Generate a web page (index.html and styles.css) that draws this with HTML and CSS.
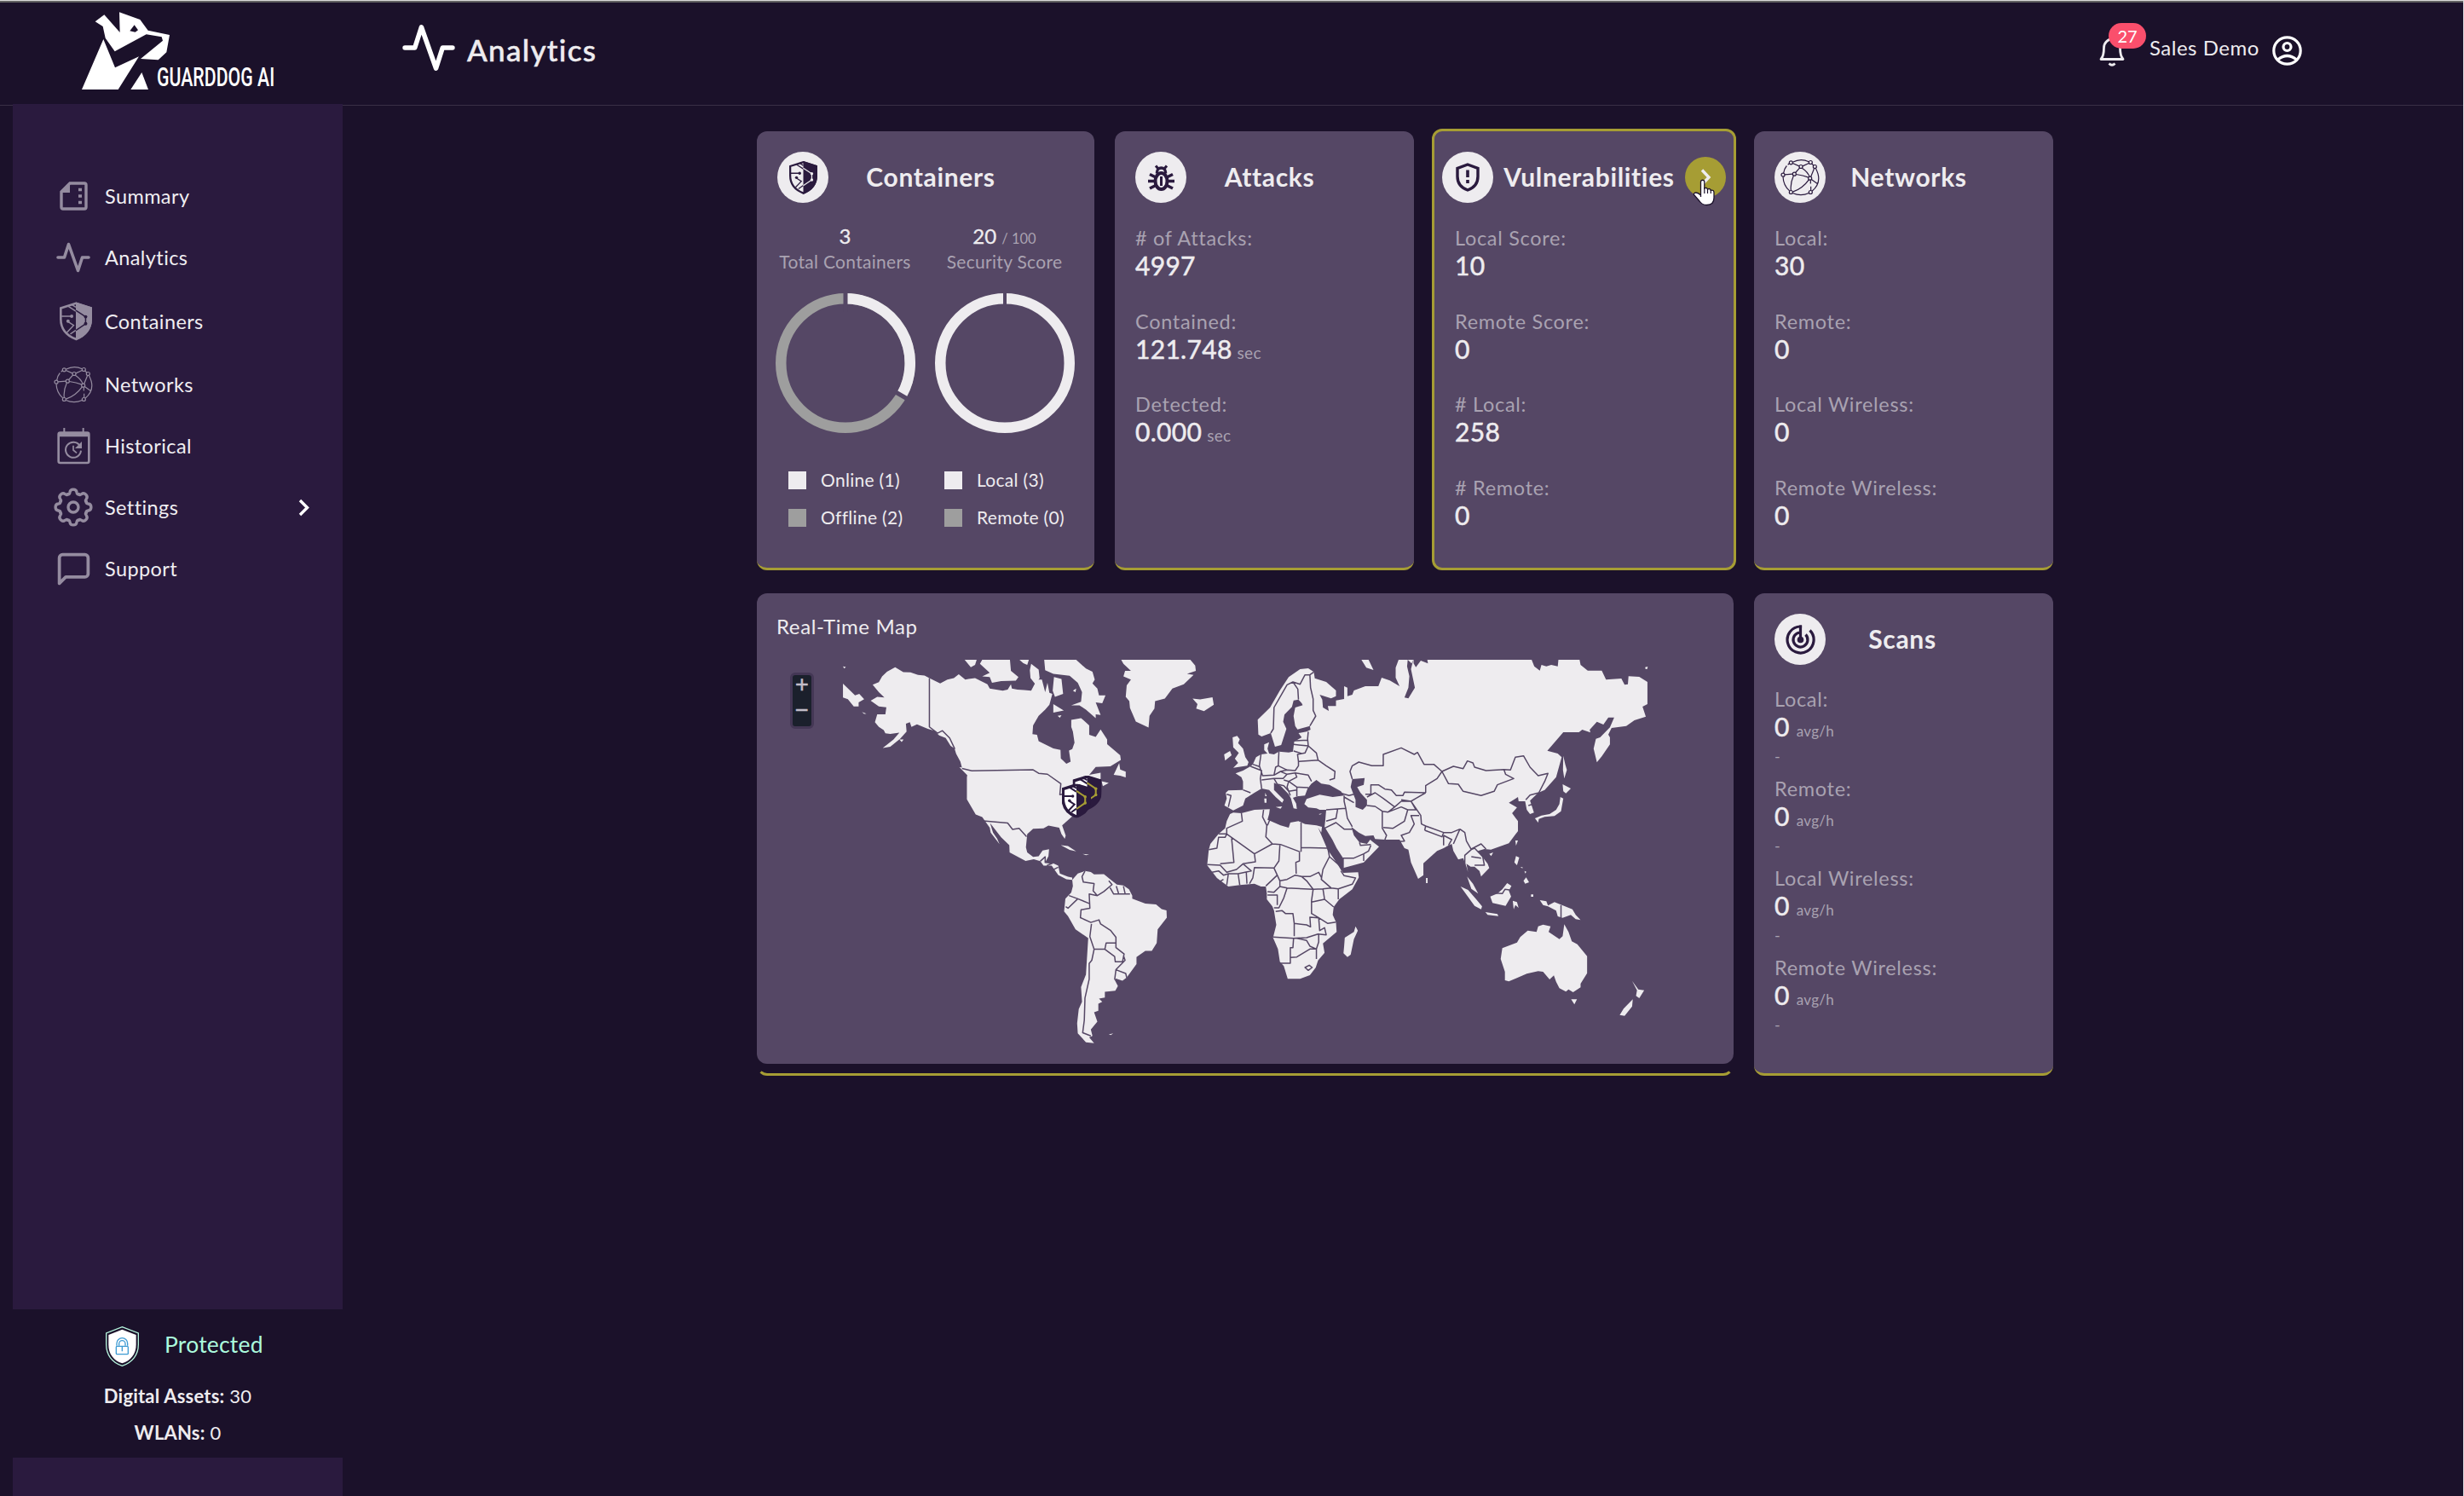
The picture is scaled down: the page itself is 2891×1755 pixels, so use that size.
FILE: index.html
```html
<!DOCTYPE html>
<html lang="en">
<head>
<meta charset="utf-8">
<title>Guarddog AI - Analytics</title>
<link rel="stylesheet" href="styles.css">
</head>
<body>
<svg width="0" height="0" class="defs" aria-hidden="true">
  <symbol id="i-shield" viewBox="0 0 116 137">
    <path class="sh-bg" d="M58 2 112 20V60C112 94 92 120 58 134 24 120 4 94 4 60V20Z"/>
    <g class="sh-left"><path d="M6 50H40M30 70 50 83 26 108M38 114 58 100M30 14 58 32M42 8 58 18"/><circle cx="43" cy="50" r="6"/><circle cx="30" cy="68" r="6"/></g>
    <path class="sh-edge" d="M58 4 112 21V60C112 94 92 119 58 132 24 119 4 94 4 60V21Z"/>
    <path class="sh-fill" d="M58 0 116 18V60C116 97 94 122 58 137Z"/>
    <g class="sh-right"><path d="M58 29 93 52V77L58 101"/><circle cx="93" cy="52" r="6"/><circle cx="93" cy="77" r="6"/></g>
  </symbol>
  <symbol id="i-net" viewBox="0 0 138 131">
    <g fill="none" stroke="currentColor" stroke-width="3.6">
      <path d="M43 12Q72-3 100 11M110 18 118 24M124 34Q150 82 111 114M100 121Q72 134 43 121M32 113Q10 94 9 63M11 51Q14 34 22 25M26 21 31 17M43 16 66 26M78 26 100 16M68 32 53 49M76 33Q96 46 102 63M15 56 43 54M55 55Q80 58 99 66M46 60Q34 86 37 112M119 34 107 63M100 74Q78 105 43 117M106 75V88M107 98V112M109 73 130 88"/>
      <circle cx="37" cy="14" r="6"/><circle cx="106" cy="13" r="6"/><circle cx="72" cy="28" r="6"/><circle cx="121" cy="28" r="6"/><circle cx="9" cy="57" r="6"/><circle cx="49" cy="54" r="6"/><circle cx="104" cy="69" r="6"/><circle cx="37" cy="118" r="6"/><circle cx="106" cy="118" r="6"/>
    </g>
  </symbol>
  <symbol id="i-pulse" viewBox="0 0 40 36">
    <path d="M2 18H9.500L14.500 2.500 25.500 33.500 30.500 18H38" fill="none" stroke="currentColor" stroke-width="3.6" stroke-linecap="round" stroke-linejoin="round"/>
  </symbol>
  <path id="tooth" d="M-19-46C-14-44-13-48-12-53-10-66 10-66 12-53 13-48 14-44 19-46"/>
</svg>

<header class="topbar">
  <svg class="logo" viewBox="0 0 780 360" role="img" aria-label="Guarddog AI">
    <path fill="#fff" fill-rule="evenodd" d="M127 52 182 114 180 43 253 69 281 107 357 123 346 184 317 211 255 207 333 143 329 130 275 121 164 181 131 134 122 93 95 76ZM233 88 217 109 236 113 246 106Z"/>
    <path fill="#fff" d="M124 138 165 238 249 199 176 315H48ZM259 255 282 315H220Z"/>
    <text transform="translate(312 302) scale(.695 1)" class="wordmark">GUARDDOG AI</text>
  </svg>
  <h1 class="page-title"><svg class="title-pulse"><use href="#i-pulse"/></svg><span>Analytics</span></h1>
  <div class="user">
    <div class="bell">
      <svg viewBox="0 0 30 36" width="30" height="36"><path d="M2 27.500C5 24 5.500 21 5.500 14A9.500 10 0 0 1 24.500 14C24.500 21 25 24 28 27.500Z" fill="none" stroke="#eeecef" stroke-width="2.800" stroke-linejoin="round"/><path d="M11.500 32.500Q15 36 18.500 32.500" fill="none" stroke="#eeecef" stroke-width="2.800"/></svg>
      <span class="badge">27</span>
    </div>
    <span class="user-name">Sales Demo</span>
    <svg class="avatar" viewBox="0 0 35 35"><g fill="none" stroke="#fff" stroke-width="3.200"><circle cx="17.500" cy="17.500" r="15.700"/><circle cx="17.500" cy="13" r="4.500"/><path d="M6.500 28Q17.500 19 28.500 28"/></g></svg>
  </div>
</header>

<div class="shell">
  <aside class="sidebar">
    <nav class="nav">
      <a class="nav-item r72"><span class="nav-icon"><svg width="33" height="34" viewBox="0 0 33 34"><path d="M12 2H29Q31 2 31 4V30Q31 32 29 32H4Q2 32 2 30V12Z" fill="none" stroke="currentColor" stroke-width="3.400"/><path d="M12 1V13H1Z" fill="currentColor"/><path d="M22 9.500h4M22 17h4M22 24.500h4" stroke="currentColor" stroke-width="3.400"/></svg></span><span class="nav-label">Summary</span></a>
      <a class="nav-item r72"><span class="nav-icon"><svg width="40" height="36"><use href="#i-pulse"/></svg></span><span class="nav-label">Analytics</span></a>
      <a class="nav-item r78"><span class="nav-icon in-right"><svg class="shield-nav" width="38" height="46"><use href="#i-shield"/></svg></span><span class="nav-label">Containers</span></a>
      <a class="nav-item r70"><span class="nav-icon"><svg width="46" height="44"><use href="#i-net"/></svg></span><span class="nav-label">Networks</span></a>
      <a class="nav-item r74"><span class="nav-icon"><svg width="39" height="43" viewBox="0 0 117 129"><rect x="5" y="17" width="107" height="106" rx="6" fill="none" stroke="currentColor" stroke-width="8"/><path d="M4 16H113V31H4ZM22 0h6v18h-6ZM89 0h6v18h-6Z" fill="currentColor"/><path d="M80 63A27 27 0 1 0 84 80" fill="none" stroke="currentColor" stroke-width="6"/><path d="M87 48V72H63Z" fill="currentColor"/><path d="M57 62V78L69 88" fill="none" stroke="currentColor" stroke-width="5"/></svg></span><span class="nav-label">Historical</span></a>
      <a class="nav-item r70"><span class="nav-icon"><svg width="46" height="46" viewBox="-69 -69 138 138"><g fill="none" stroke="currentColor" stroke-width="10" stroke-linecap="round"><circle r="18"/><use href="#tooth"/><use href="#tooth" transform="rotate(45)"/><use href="#tooth" transform="rotate(90)"/><use href="#tooth" transform="rotate(135)"/><use href="#tooth" transform="rotate(180)"/><use href="#tooth" transform="rotate(225)"/><use href="#tooth" transform="rotate(270)"/><use href="#tooth" transform="rotate(315)"/></g></svg></span><span class="nav-label">Settings</span><svg class="nav-more" viewBox="0 0 13 21"><path d="M2 2 10.500 10.500 2 19" fill="none" stroke="#fff" stroke-width="3.400"/></svg></a>
      <a class="nav-item r74"><span class="nav-icon"><svg width="45" height="45" viewBox="0 0 24 24"><path d="M21 15a2 2 0 0 1-2 2H7l-4 4V5a2 2 0 0 1 2-2h14a2 2 0 0 1 2 2z" fill="none" stroke="currentColor" stroke-width="2" stroke-linejoin="round"/></svg></span><span class="nav-label">Support</span></a>
    </nav>
    <div class="status">
      <div class="status-head">
        <svg width="39" height="47" viewBox="0 0 117 141"><path d="M58 2 115 24V64C115 100 94 128 58 139 22 128 2 100 2 64V24Z" fill="#1b112a" stroke="#b5f3dc" stroke-width="4"/><path d="M58 11 107 30V65C107 97 88 120 58 130 28 120 10 97 10 65V30Z" fill="#fff"/><g fill="none" stroke="#3d9bd3" stroke-width="4"><rect x="37" y="70" width="42" height="28" rx="3"/><path d="M39 68V60A19 19 0 0 1 77 60V68M47 68V61A11 11 0 0 1 69 61V68M58 72V88"/></g></svg>
        <span class="protected">Protected</span>
      </div>
      <p class="status-line l1"><b>Digital Assets:</b> 30</p>
      <p class="status-line l2"><b>WLANs:</b> 0</p>
    </div>
  </aside>

  <main class="board">
    <section class="card containers">
      <div class="card-head"><span class="disc"><svg class="shield-card" width="33" height="39"><use href="#i-shield"/></svg></span><h2>Containers</h2><i class="slot"></i></div>
      <div class="gauges">
        <div class="gauge">
          <p class="g-num">3</p><p class="g-label">Total Containers</p>
          <svg width="164" height="164" viewBox="-82 -82 164 164"><g fill="none" stroke-width="12.500"><circle r="75.750" stroke="#9e9e9e"/><path d="M0-75.750A75.750 75.750 0 0 1 65.600 37.875" stroke="#eeecef"/></g><path d="M0-60V-84M52 30 72.700 42" stroke="#554765" stroke-width="5"/></svg>
        </div>
        <div class="gauge">
          <p class="g-num">20 <small>/ 100</small></p><p class="g-label">Security Score</p>
          <svg width="164" height="164" viewBox="-82 -82 164 164"><circle r="75.750" fill="none" stroke-width="12.500" stroke="#eeecef"/><path d="M0-60V-84" stroke="#554765" stroke-width="4"/></svg>
        </div>
      </div>
      <ul class="legend">
        <li><i class="on"></i><span>Online (1)</span></li><li><i class="on"></i><span>Local (3)</span></li>
        <li><i></i><span>Offline (2)</span></li><li><i></i><span>Remote (0)</span></li>
      </ul>
    </section>

    <section class="card">
      <div class="card-head"><span class="disc"><svg width="31" height="31" viewBox="0 0 31 31"><g fill="none" stroke="#2a1a3e"><path d="M9 1.500 12 5M22 1.500 19 5" stroke-width="3"/><path d="M10.500 10.500V9A5 5 0 0 1 20.500 9V10.500" stroke-width="3.400"/><ellipse cx="15.500" cy="19.500" rx="7" ry="9.500" stroke-width="4"/><path d="M15.500 14V25" stroke-width="3"/><path d="M0 19.500H8M23 19.500H31M2 11.500 9 15M29 11.500 22 15M2 28 9 24.500M29 28 22 24.500" stroke-width="3.600"/></g></svg></span><h2>Attacks</h2><i class="slot"></i></div>
      <dl class="stats">
        <div><dt># of Attacks:</dt><dd>4997</dd></div>
        <div><dt>Contained:</dt><dd>121.748 <small>sec</small></dd></div>
        <div><dt>Detected:</dt><dd>0.000 <small>sec</small></dd></div>
      </dl>
    </section>

    <section class="card active">
      <div class="card-head tight"><span class="disc"><svg width="28" height="34" viewBox="0 0 28 34"><path d="M14 2 26 6.500V16C26 24 21 29.500 14 32 7 29.500 2 24 2 16V6.500Z" fill="none" stroke="#2a1a3e" stroke-width="3.400"/><path d="M14 8.500V17M14 20V24" stroke="#2a1a3e" stroke-width="3.600"/></svg></span><h2>Vulnerabilities</h2>
        <span class="go"><svg width="13" height="20" viewBox="0 0 13 20"><path d="M2 1.500 10 10 2 18.500" fill="none" stroke="#eeecef" stroke-width="3.400"/></svg>
          <svg class="cursor" width="26" height="33" viewBox="0 0 26 33"><path d="M9.500 22V4A2.200 2.200 0 0 1 13.800 4V12Q16.500 10.500 17.500 13 20.500 11.500 21.300 14.300 25 13.500 25 17V23Q25 31.500 16.500 31.500 11 31.500 8 27L1.500 19.500Q1 17 4 17 6.500 17 9.500 20Z" fill="#fff" stroke="#1b112a" stroke-width="1.300"/><path d="M13.800 11V18M17.500 13V18M21.300 14V18" stroke="#1b112a" stroke-width="1.200"/></svg></span></div>
      <dl class="stats">
        <div><dt>Local Score:</dt><dd>10</dd></div>
        <div><dt>Remote Score:</dt><dd>0</dd></div>
        <div><dt># Local:</dt><dd>258</dd></div>
        <div><dt># Remote:</dt><dd>0</dd></div>
      </dl>
    </section>

    <section class="card">
      <div class="card-head"><span class="disc dark-net"><svg width="46" height="44"><use href="#i-net"/></svg></span><h2>Networks</h2><i class="slot"></i></div>
      <dl class="stats">
        <div><dt>Local:</dt><dd>30</dd></div>
        <div><dt>Remote:</dt><dd>0</dd></div>
        <div><dt>Local Wireless:</dt><dd>0</dd></div>
        <div><dt>Remote Wireless:</dt><dd>0</dd></div>
      </dl>
    </section>

    <section class="map-wrap">
      <div class="map-card">
        <h3>Real-Time Map</h3>
        <div class="zoomer"><span>+</span><span>−</span></div>
        <svg class="map" viewBox="976 774 970 450" width="970" height="450">
          <g transform="translate(880 690) scale(.38265 .3699)">
            <g class="land">
              <path d="M550 285 535 277 515 275 492 267 470 266 445 251 420 265 405 280 395 298 376 306 395 330 412 347 390 345 370 357 395 375 418 378 415 400 390 400 383 425 395 440 410 450 415 460 430 462 458 458 440 480 407 507 430 503 460 478 480 455 478 430 490 425 495 440 512 432 545 446 565 452 580 467 600 475 615 500 627 508 632 525 645 550 650 570 668 580 665 600V670L692 718 712 726 735 760 738 775 765 812 758 795 745 775 736 745 770 790 795 815 796 838 845 865 870 860 890 866 900 880 925 880 945 910 970 923 988 925 988 918 975 915 950 905 945 880 928 872 905 870 915 850 917 828 897 832 885 850 868 852 850 838 846 822 850 780 868 763 900 762 915 753 948 760 955 780 965 795 968 785 957 752 990 722 1010 700 1030 650 1050 615 1075 605 1075 585 1040 592 1060 567 1105 565 1137 545 1135 530 1095 495 1095 480 1075 448 1060 472 1040 465 1040 435 1015 412 985 418 985 440 990 455 995 490 988 510 978 515 983 550 970 557 953 540 952 513 930 508 885 485 880 465 866 463 868 435 885 405 905 385 918 370 927 335 918 332 912 300 905 330 895 290 880 290 862 325 840 323 820 322 803 318 800 305 790 322 775 325 735 318 728 305 690 285 670 288 660 290 640 273 625 285 605 290 583 302Z"/>
              <path d="M658 227H695L690 243 677 251ZM712 227H797L800 262 823 282 815 293 770 295 742 300 735 282 712 280 735 268 705 240ZM826 227H855L850 243 838 238ZM862 240 885 258 888 285 875 305 860 285 858 260ZM902 227H1000L1030 255 1050 265 1057 290 1050 302 1065 318 1070 340 1090 340 1080 365 1060 362 1075 402 1060 400 1060 412 1030 385 1010 372 985 372 1015 360 1018 330 1005 300 980 278 930 272 905 260ZM932 282 955 288 960 335 935 345 928 325ZM930 368 962 388 930 395ZM990 325 1000 318 998 330ZM943 405 955 403 950 411ZM1132 555 1135 575 1152 582V600L1135 595 1115 592ZM1078 612 1100 618 1082 628ZM642 568 660 570 680 585V600L665 592ZM285 303 310 328 322 340 335 335 350 352 333 362 333 375 318 375 300 352 285 347ZM285 248 294 250 289 255ZM343 393 357 398 350 399ZM458 480H471L465 488ZM953 815 975 818 1000 835 980 830ZM1020 843 1040 845 1030 847ZM1100 1415 1114 1412 1106 1417Z"/>
              <path d="M1138 227H1350L1365 245 1367 262 1340 272 1360 275 1330 305 1295 318 1272 350 1242 358 1240 382 1225 405 1222 442 1183 423 1165 380 1163 358 1152 345 1155 308 1168 290 1145 280 1150 262 1168 262 1145 240ZM1357 350 1380 353 1418 346 1422 370 1392 390 1368 382 1372 368Z"/>
              <path d="M988 925 1005 905 1027 897 1045 900 1055 908 1085 907 1110 928 1125 940 1145 943 1162 955 1172 975 1172 985 1212 1000 1245 1003 1262 1018 1277 1022 1278 1045 1250 1082 1247 1125 1232 1150 1212 1150 1185 1170 1185 1192 1155 1235 1142 1245 1122 1238 1118 1242 1128 1262 1120 1277 1088 1280 1088 1298 1070 1302 1080 1312 1068 1318 1068 1340 1055 1345 1065 1375 1045 1400 1050 1420 1040 1425 1055 1443 1030 1440 1005 1412 1003 1380 1008 1335 1018 1312 1015 1265 1030 1225 1037 1110 998 1082 975 1040 963 1025 967 985 985 965 990 945Z"/>
            </g>
            <path class="border" d="M550 285V440L575 460 590 452 612 475 628 510M650 572 680 579 868 576 885 587 912 590 953 620 950 655 975 650 990 640 1030 610M715 738 790 745 805 765 825 762 848 788M890 866 905 852V870L928 872 910 880M925 895 945 885M1027 897 1018 915 1022 932 1055 937 1052 960 1065 975 1085 962 1110 940 1100 928M1104 950 1115 970 1165 970M1130 968 1123 945M1150 968 1145 945M1065 975 1040 970 1042 1015 1015 1020 1013 1045 1045 1060 1070 1052 1075 1065 1105 1085 1122 1107V1125L1092 1125 1088 1145 1055 1145 1042 1105 1047 1065M978 975 1005 985 975 1015 968 1010M1005 985 1040 1000M1055 1145 1048 1180 1040 1190V1240L1027 1300 1025 1370 1020 1410 1045 1420M1088 1145 1118 1168 1120 1185H1142L1147 1160 1122 1140V1125M1145 1165 1150 1180 1122 1210 1118 1242M1122 1210 1152 1222 1155 1235"/>
          </g>
          <g transform="translate(1380 750) scale(.38265 .33333)">
            <g class="land">
              <path d="M422 115 405 102 380 105 345 133 318 180 288 240 250 283 252 335 262 342 290 330 303 378 322 372 338 315 328 290 332 265 355 238 360 215 375 212 385 225 388 232 365 240 360 270 365 305 372 317 410 305 412 318 400 325 375 330 385 345 362 360 358 395 345 398 315 395 300 405 285 402 280 385 285 362 270 370V390L280 402 260 405 245 415 235 440 228 447 205 462 182 472 200 485 205 500V530L160 532 152 540 155 560 148 585 175 602 205 585 212 560 240 540 262 525 285 530 305 555 325 575 330 565 300 530V505L320 515 345 545 352 560 360 595 370 597 368 578 358 558 370 553 395 550 403 525 415 508 430 495 445 508 470 512 505 535 515 550 480 555 440 547 400 562 393 580 405 592 430 595 440 600 460 600 457 640 455 660 479 705 492 735 512 770V805L575 785 622 730 600 710 595 705 585 720 562 715 545 690 537 660 560 680 580 692 605 690 610 703 640 705 685 705 700 735 712 740 720 785 742 843 758 830V788L800 745 820 735 835 725 845 720 850 745 865 775 880 770 890 800 895 820 890 790 903 800 915 800 930 815 935 835 960 805 955 790 935 760 925 745 945 738 965 740 1020 718 1048 675V640L1030 612 1045 592 1020 575 1048 555 1050 570 1070 570 1075 600 1085 615 1097 610 1090 585 1085 568 1110 540 1130 530 1165 485 1182 415 1170 402 1138 392 1187 327H1235L1245 318 1270 328 1268 318 1290 290 1310 300 1325 275 1343 275 1330 310 1300 345 1287 350 1280 385 1290 433 1305 412 1330 370 1330 345 1325 335 1335 312 1380 305 1405 285 1440 272 1430 237 1445 228V150L1420 132 1387 130 1385 158 1375 160 1365 138 1318 142 1305 110H1262L1240 90 1237 72H1172L1170 95 1150 90 1135 95 1120 90 1115 110 1098 95 1090 72H770L772 85 750 75 735 98 728 85V72H682L673 100V135L685 165 655 145 630 135 620 165 580 165 545 180 540 195 525 200V170L515 165V210L490 215V235L465 235 468 252 450 240 448 212 440 195 475 208 490 200V180L460 150 425 137Z"/>
              <path d="M568 72H590L605 108 583 100ZM1187 410 1193 440 1198 460 1190 490 1186 460ZM1185 510 1210 525 1195 542 1187 535ZM1178 555 1187 560 1180 605 1160 622 1130 625 1112 632 1110 645 1100 630 1120 620 1145 615 1165 600 1175 580ZM173 345 187 340 195 352 190 365 205 385 212 415 222 432 218 445 175 452 190 435 180 420 192 400 175 380ZM165 393 170 408 150 427 147 405ZM305 590 325 588 320 596ZM270 560H277V575H271ZM273 540 278 552H273ZM437 615 447 613 441 617ZM766 840H771V858H766ZM1040 708H1048L1042 726ZM960 755 972 750 966 763ZM1042 763 1052 768 1045 795 1037 785ZM1065 850 1073 838 1082 855 1070 860ZM1055 802H1062V806ZM1068 815 1074 818 1070 824ZM1088 898H1095V906H1088ZM1438 98 1446 96 1444 105 1439 104ZM872 870 895 882 920 915 938 940 935 950 915 938ZM892 835 910 860 926 895 905 878ZM948 960 985 967 988 974 955 970ZM963 905 985 895 1000 880 1015 858 1028 868 1020 885 1027 905 1010 938 970 928ZM1032 920 1045 925 1050 945 1040 935 1035 950ZM1115 918 1135 922 1140 937 1160 925 1215 950 1225 970 1240 988 1225 985 1210 970 1185 980 1170 975 1165 955 1140 940 1125 935Z"/>
              <path d="M1000 1087 1045 1067 1055 1048 1078 1025 1105 1030 1110 1010 1125 1004 1148 1010 1142 1030 1175 1055 1185 1045 1190 1003 1203 1030 1213 1063 1230 1073 1260 1115V1175L1240 1212V1225L1217 1242 1203 1232 1195 1240 1175 1228 1165 1205 1158 1183 1145 1197 1125 1170 1110 1168 1075 1177 1045 1192 1020 1204 1008 1200V1170L995 1125ZM1211 1267H1229L1221 1285ZM1398 1202 1417 1232 1435 1235 1420 1263 1410 1255 1413 1235ZM1400 1267 1398 1292 1375 1325 1360 1322 1372 1300ZM550 1010 557 1025 545 1055 535 1110 525 1118 513 1105 515 1080 517 1050 545 1030Z"/>
              <path d="M165 615 175 610 200 612 240 600 287 598 285 615 280 635 290 640 320 655 345 663 350 645 375 640 395 650 430 655 447 660 445 680 435 662 453 710 464 740 485 775 505 810 512 822 558 820 560 838 540 880 500 915 483 942 480 970 490 995 492 1030 450 1070 455 1103 435 1130 428 1155 410 1182 380 1195H342L330 1150 318 1135 312 1090 297 1050 307 1005 300 955 295 940 278 915V895L275 870 260 870 240 860 195 865 160 870 125 840 95 795 100 740 105 720 130 685 150 665 155 640Z"/>
            </g>
            <path class="sea" d="M540 492 578 488 575 512 555 520 565 540 585 565V585L572 600 550 590V565L535 520ZM710 72 722 85 727 72 720 105 732 170 712 208 700 205 712 170 715 130 708 95Z"/>
            <path class="border" d="M200 612 203 640 155 665V685H130M155 685 150 697H130L125 735 100 740M155 685 240 755 295 720 275 695 278 655 265 625 268 600M280 655 287 635M170 700 177 785 135 790M240 755 243 783 205 790 185 810 155 820 135 795 95 793M295 720 320 722 380 748M383 645V748M383 733 465 735M378 748V780L367 785 368 825M318 725 315 780 300 805 240 803 235 840 225 860M300 805 318 850 340 845 365 830 385 835 410 835 437 820 447 842M465 735 470 765 450 810 445 845 475 875 497 878 540 862 550 840 515 832 505 815M470 765 500 795 508 812M318 850V870L340 875 420 880 400 850 385 835M420 880 450 878 475 875M300 805 310 830 275 868M318 870 300 890 280 888M280 900H310V935M340 875 330 910 315 945 300 945M420 880 415 920V965L437 980M305 958 325 955 335 965 358 965 362 1000 400 1005 412 1012 410 978 437 980M297 1048 360 1052M362 1000 362 1045M360 1052 400 1050 435 1037 460 1040 455 1015 440 1025 437 980M450 878 455 915 415 925M455 915 483 942M497 878V915M437 980 465 1000 490 995M370 1052 400 1060 410 1080 430 1090 437 1065V1037M360 1052 358 1085 350 1085V1140L318 1140M350 1120 370 1118 410 1090 430 1090V1125M395 1155 408 1147 417 1155 405 1165ZM190 825H160L155 865M160 825 145 830 130 815 110 820M190 825 195 865M215 820 217 860M205 790 230 815 190 825M145 845 130 855M290 330 298 315 300 240 325 190 340 160 358 150 380 158 395 125 410 125 422 115M358 150 373 175 375 212M410 125 412 170 420 210V250L428 270 410 305M405 325 403 350 405 375 430 400 435 425 460 445 487 465 485 490 470 495M435 425 375 430 372 405 395 400 405 375 360 370M385 402 360 393M362 357 403 355M315 395 313 445 340 460 365 462 375 445V430M260 405 255 445 265 480 300 478 305 450 313 445M228 447 262 462 258 490 262 525M205 530 228 540M155 545 168 550 160 590M262 495 300 490 328 490 340 475 365 470 370 485 345 500 330 495M365 470 405 478 415 500M345 500 370 520 405 522M370 520V552M345 500 340 520 350 550M300 478 320 465 340 475M320 465 340 460M300 490 310 510 330 515 345 535 370 530M235 440 255 448M460 600 520 595 515 570V550M500 540 530 550 545 545M515 555 545 575M520 595 525 630 540 660M495 598 490 630 460 640M455 665 490 645 515 668 540 668M512 805V770L545 770 575 755 590 745 597 725M575 755V780M562 715 565 725 597 722M585 585 610 588 632 605V665L645 690 640 705M632 605 650 608 690 590 710 600 700 640 665 665 635 662M540 492 533 465 540 445 560 432 600 445H635V405L690 382 730 405 740 398 760 440H790L815 465 800 490 765 515V540M580 545 597 545V512L620 512 640 527 660 530 675 550 695 550 700 538 765 540M585 555 610 540 635 560 670 590 650 608M765 540 735 560 720 570 690 565M670 590 690 570 720 570 735 600 710 600M745 620H720L730 650 715 680 690 690 700 710 685 712M720 570 750 620 752 650 765 657 820 680 845 680 870 668M762 672 815 695 820 680M762 672 765 657M820 690 845 705 835 725M820 690V725M870 668 850 720M870 668 885 680 890 710 905 740 885 760V800M905 740 915 735 940 765 945 795H915M905 765 935 770M905 738 935 720 950 738M815 465 850 447 880 455 893 428 910 435 915 450 950 462 1005 458 1010 475 1035 490 985 512 975 535 935 550 880 535 865 510 835 508ZM1005 458 1025 460 1040 415 1065 410 1085 450 1110 480 1140 472 1130 500 1112 540 1085 548 1072 565M1080 585 1095 580M1180 935V980M975 893 1000 895 1008 880 1022 882"/>
          </g>
          <g class="pins">
            <svg class="shield-pin" x="1258.500" y="910" width="34" height="40"><use href="#i-shield"/></svg>
            <svg class="shield-pin" x="1246" y="919.500" width="34" height="40"><use href="#i-shield"/></svg>
          </g>
        </svg>
      </div>
    </section>

    <section class="card scans">
      <div class="card-head"><span class="disc"><svg width="35" height="35" viewBox="-17.500 -17.500 35 35"><g fill="none" stroke="#2a1a3e" stroke-width="3.200"><path d="M1.600-15.500H0A15.500 15.500 0 1 0 11-11"/><path d="M0-8.500A8.500 8.500 0 1 0 6-6M0-17V0"/><circle r="2.200" fill="#2a1a3e"/></g></svg></span><h2>Scans</h2><i class="slot"></i></div>
      <dl class="stats">
        <div><dt>Local:</dt><dd>0 <small>avg/h</small></dd><dd class="dash">-</dd></div>
        <div><dt>Remote:</dt><dd>0 <small>avg/h</small></dd><dd class="dash">-</dd></div>
        <div><dt>Local Wireless:</dt><dd>0 <small>avg/h</small></dd><dd class="dash">-</dd></div>
        <div><dt>Remote Wireless:</dt><dd>0 <small>avg/h</small></dd><dd class="dash">-</dd></div>
      </dl>
    </section>
  </main>
</div>
</body>
</html>
```
FILE: styles.css
```css
* { box-sizing: border-box; }
html, body { height: 100%; }
body {
  margin: 0;
  height: 1755px;
  overflow: hidden;
  display: flex;
  flex-direction: column;
  background: #1b112a;
  border-top: 1px solid #dcdcdc;
  border-right: 1px solid #dcdce0;
  color: #eeecef;
  font-family: Lato, "Noto Sans", sans-serif;
}
.defs { position: absolute; }
h1, h2, h3, p, ul, dl, dd { margin: 0; padding: 0; }
ul { list-style: none; }
svg { display: block; flex: none; }

.topbar {
  height: 123px;
  flex: none;
  display: flex;
  border-top: 2px solid #626262;
  border-bottom: 1px solid #392f46;
}
.logo { width: 260px; height: 120px; margin: -3px 0 0 80px; }
.wordmark { font: 500 92px Roboto, sans-serif; fill: #fff; }
.page-title {
  display: flex;
  margin-left: 132px;
  font-weight: 500;
  font-size: 35px;
  line-height: 40px;
  letter-spacing: 1.3px;
  -webkit-text-stroke: .5px;
}
.title-pulse { width: 62px; height: 56px; margin: 25px 14px 0 0; color: #fff; }
.page-title span { margin-top: 35px; }
.user { display: flex; margin-left: auto; width: 427px; }
.bell { position: relative; width: 59px; padding-top: 39px; }
.badge {
  position: absolute;
  left: 11px;
  top: 24px;
  width: 44px;
  height: 30px;
  border-radius: 15px;
  background: #fa4f6c;
  color: #fff;
  text-align: center;
  font-size: 20px;
  line-height: 30px;
}
.user-name { width: 144px; margin-top: 38px; font-size: 24px; line-height: 30px; letter-spacing: .5px; white-space: nowrap; }
.avatar { width: 35px; height: 35px; margin-top: 39px; }

.shell { flex: 1; display: flex; min-height: 0; }
.sidebar {
  width: 387px;
  margin: -2px 0 0 15px;
  padding-top: 72px;
  background: #2a1a3e;
  display: flex;
  flex-direction: column;
}
.nav-item { display: flex; align-items: center; padding: 0 39px 0 46px; color: #958ca0; }
.r70 { height: 70px; } .r72 { height: 72px; } .r74 { height: 74px; } .r78 { height: 78px; }
.nav-icon { width: 50px; margin-right: 12px; display: flex; justify-content: center; }
.nav-icon.in-right { padding-left: 6px; }
.nav-label { margin-top: -1px; font-size: 23.500px; line-height: 30px; letter-spacing: .4px; color: #f0eef2; }
.nav-more { width: 13px; height: 21px; margin-left: auto; }
.status { margin: 832px 0 0; height: 174px; background: #1b112a; }
.status-head { display: flex; padding: 20px 0 0 109px; }
.protected { margin: 1px 0 0 30px; font-size: 26.500px; line-height: 40px; color: #abfbdd; letter-spacing: .2px; }
.status-line { text-align: center; font-size: 22px; line-height: 28px; letter-spacing: .2px; }
.l1 { margin-top: 21px; }
.l2 { margin-top: 15px; }

.board {
  margin: 30px 0 0 486px;
  display: grid;
  grid-template-columns: 396px 351px 351px 351px;
  grid-template-rows: 515px 566px;
  gap: 27px 24px;
}
.card {
  background: #554765;
  border-radius: 12px;
  border-bottom: 3px solid #a69d34;
  padding: 24px;
}
.active { border: 3px solid #a69d34; margin: -3px -3px 0; }
.card-head { display: flex; align-items: center; height: 60px; }
.card-head.tight { margin: 0 -15px; }
.disc { width: 60px; height: 60px; border-radius: 50%; background: #eeecef; display: flex; align-items: center; justify-content: center; flex: none; }
.dark-net { color: #2a1a3e; }
.card h2 { flex: 1; text-align: center; font-size: 30px; line-height: 40px; font-weight: 700; letter-spacing: .65px; margin-top: -2px; white-space: nowrap; }
.slot { width: 48px; flex: none; }
.go { position: relative; width: 48px; height: 48px; border-radius: 50%; background: #a69d34; display: flex; align-items: center; justify-content: center; flex: none; }
.cursor { position: absolute; left: 9px; top: 25px; }

.stats { margin-top: 24px; }
.stats > div { height: 97.600px; }
.stats dt { font-size: 23.500px; line-height: 35px; color: #a9a2b1; letter-spacing: .7px; }
.stats dd { font-size: 30px; line-height: 28px; letter-spacing: .3px; -webkit-text-stroke: .5px; }
.stats small { font-size: 19px; line-height: 1; color: #a9a2b1; -webkit-text-stroke: 0; margin-left: -2px; }
.scans h2 { padding-right: 15px; }
.scans .stats { margin-top: 23px; }
.scans .stats > div { height: 105px; }
.scans .stats small { font-size: 17px; margin-left: 0; }
.scans .stats .dash { font-size: 18px; color: #a9a2b1; line-height: 42px; -webkit-text-stroke: 0; }

.gauges { display: flex; margin: 23px -24px 0 -14px; }
.gauge { width: 187px; flex: none; display: flex; flex-direction: column; align-items: center; }
.g-num { font-size: 24px; line-height: 31px; height: 31px; -webkit-text-stroke: .3px; }
.g-num small { font-size: 16.500px; color: #a9a2b1; -webkit-text-stroke: 0; }
.g-label { font-size: 21px; line-height: 30px; letter-spacing: .3px; color: #a9a2b1; margin-bottom: 22px; white-space: nowrap; }
.legend { display: grid; grid-template-columns: 183px 1fr; grid-auto-rows: 44px; margin: 33px -24px 0 13px; }
.legend li { display: flex; align-items: center; font-size: 21px; line-height: 28px; letter-spacing: .3px; white-space: nowrap; }
.legend i { width: 21px; height: 21px; background: #9e9e9e; margin-right: 17px; }
.legend i.on { background: #eeecef; }

.map-wrap { grid-column: 1 / 4; border: solid transparent; border-width: 0 3px 3px; border-bottom-color: #a69d34; border-radius: 12px; }
.map-card { position: relative; height: 552px; margin: 0 -3px; background: #554765; border-radius: 12px; padding: 24px 0 0 88px; }
.map-card h3 { margin-left: -65px; font-weight: 400; font-size: 24px; line-height: 30px; height: 54px; letter-spacing: .6px; }
.zoomer {
  position: absolute;
  left: 39px;
  top: 93px;
  width: 28px;
  height: 66px;
  border: 3px solid #443755;
  border-radius: 6px;
  background: #1b202c;
  color: #c3bdc9;
  display: flex;
  flex-direction: column;
  text-align: center;
  font: 400 27px "Liberation Sans", sans-serif;
}
.zoomer span { height: 30px; line-height: 22px; -webkit-text-stroke: .5px; }
.land { fill: #eeecef; }
.sea { fill: #554765; }
.border { fill: none; stroke: #554765; stroke-width: 1.500px; vector-effect: non-scaling-stroke; stroke-linejoin: round; }

.shield-nav { --fg: #958ca0; --bg: #2a1a3e; --line: #2a1a3e; }
.shield-card { --fg: #2a1a3e; --bg: #eeecef; --line: #eeecef; }
.shield-pin { --fg: #2a1a3e; --bg: #fff; --line: #a69d34; --edge: 12; --wire: 7; }
.sh-bg { fill: var(--bg); }
.sh-edge { fill: none; stroke: var(--fg); stroke-width: var(--edge, 8); }
.sh-fill { fill: var(--fg); }
.sh-left path { fill: none; stroke: var(--fg); stroke-width: var(--wire, 4.5); }
.sh-left circle { fill: var(--fg); }
.sh-right path { fill: none; stroke: var(--line); stroke-width: var(--wire, 4.5); }
.sh-right circle { fill: var(--line); }
```
